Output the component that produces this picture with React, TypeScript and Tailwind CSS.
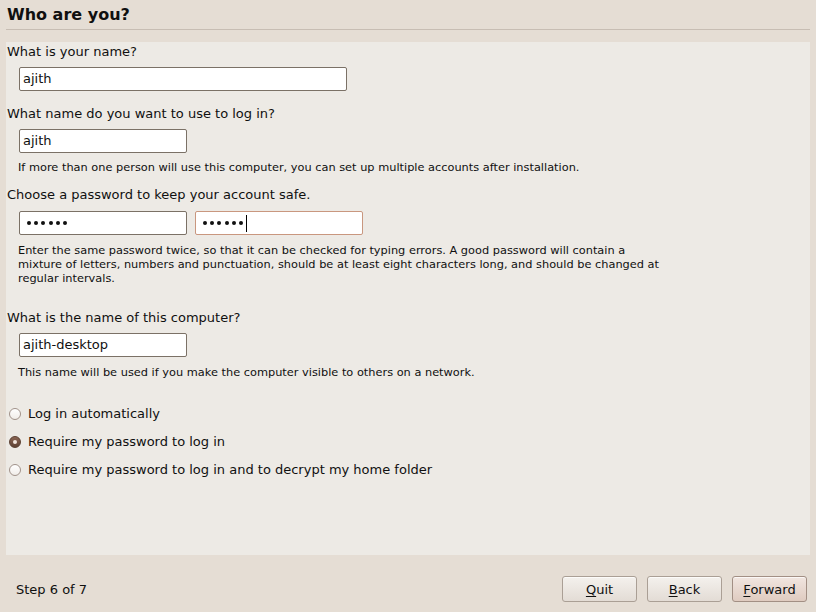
import React from "react";

const FONT = { fontFamily: '"DejaVu Sans", "Liberation Sans", sans-serif' };

function Field({ w, children, focused }: { w: string; children: React.ReactNode; focused?: boolean }) {
  return (
    <div
      className={`${w} h-[24px] bg-white rounded-[2px] border flex items-center pl-[3px] text-[13px] leading-[16px] text-[#101010] ${
        focused ? "border-[#c9977f]" : "border-[#7b7166]"
      }`}
    >
      {children}
    </div>
  );
}

function Dots({ caret }: { caret?: boolean }) {
  return (
    <div className="flex items-center pl-[2px]">
      {[0, 1, 2, 3, 4, 5].map((i) => (
        <span key={i} className="w-[7.3px] flex justify-center">
          <span className="w-[4px] h-[4px] rounded-full bg-[#101010]" />
        </span>
      ))}
      {caret && <span className="ml-[1px] w-[1px] h-[17px] bg-black" />}
    </div>
  );
}

function Radio({ checked, label }: { checked?: boolean; label: string }) {
  return (
    <div className="h-[28px] flex items-center">
      <div className="w-[28px] flex items-center pl-[9px]">
        {checked ? (
          <div className="w-[12px] h-[12px] rounded-full bg-gradient-to-b from-[#8a6553] to-[#5e4133] border border-[#5a3f31] flex items-center justify-center">
            <div className="w-[4px] h-[4px] rounded-full bg-[#f1e4dc]" />
          </div>
        ) : (
          <div className="w-[12px] h-[12px] rounded-full bg-gradient-to-b from-[#ffffff] to-[#f1ede9] border border-[#a1928a]" />
        )}
      </div>
      <span className="text-[13px] leading-[16px] text-[#101010]">{label}</span>
    </div>
  );
}

function Btn({ first, rest, def }: { first: string; rest: string; def?: boolean }) {
  return (
    <div
      className={`w-[75px] h-[26px] rounded-[3px] border flex items-center justify-center pt-[1px] text-[13px] leading-[16px] text-[#101010] shadow-[inset_0_1px_0_rgba(255,255,255,0.7)] ${
        def
          ? "border-[#a28f84] bg-gradient-to-b from-[#f1e6e0] to-[#dfcbc0]"
          : "border-[#aa9f95] bg-gradient-to-b from-[#f4f1ed] to-[#e3dcd5]"
      }`}
    >
      <span>
        <span className="underline underline-offset-[2px]">{first}</span>
        {rest}
      </span>
    </div>
  );
}

export default function App() {
  return (
    <div style={FONT} className="w-[816px] h-[612px] bg-[#e5ddd4] flex flex-col overflow-hidden">
      <div className="ml-[6px] mr-[6px] h-[30px] border-b border-[#c7bdb3] flex items-center pl-[1px] pb-[1px]">
        <span className="text-[16px] leading-[19px] font-bold text-[#101010]">Who are you?</span>
      </div>
      <div className="ml-[6px] mr-[6px] mt-[12px] h-[513px] bg-[#edeae5] flex flex-col pt-[2px]">
        <div className="pl-[1px] text-[13px] leading-[16px] text-[#101010]">What is your name?</div>
        <div className="mt-[7px] ml-[13px]">
          <Field w="w-[328px]">ajith</Field>
        </div>

        <div className="mt-[15px] pl-[1px] text-[13px] leading-[16px] text-[#101010]">What name do you want to use to log in?</div>
        <div className="mt-[7px] ml-[13px]">
          <Field w="w-[168px]">ajith</Field>
        </div>
        <div className="mt-[8px] ml-[12px] text-[11.35px] leading-[13px] text-[#101010]">
          If more than one person will use this computer, you can set up multiple accounts after installation.
        </div>

        <div className="mt-[13px] pl-[1px] text-[13px] leading-[16px] text-[#101010]">Choose a password to keep your account safe.</div>
        <div className="mt-[8px] ml-[13px] flex gap-[8px]">
          <Field w="w-[168px]">
            <Dots />
          </Field>
          <Field w="w-[168px]" focused>
            <Dots caret />
          </Field>
        </div>
        <div className="mt-[8px] ml-[12px] text-[11.35px] leading-[14px] text-[#101010]">
          Enter the same password twice, so that it can be checked for typing errors. A good password will contain a
          <br />
          mixture of letters, numbers and punctuation, should be at least eight characters long, and should be changed at
          <br />
          regular intervals.
        </div>

        <div className="mt-[25px] pl-[1px] text-[13px] leading-[16px] text-[#101010]">What is the name of this computer?</div>
        <div className="mt-[7px] ml-[13px]">
          <Field w="w-[168px]">ajith-desktop</Field>
        </div>
        <div className="mt-[9px] ml-[12px] text-[11.35px] leading-[13px] text-[#101010]">
          This name will be used if you make the computer visible to others on a network.
        </div>

        <div className="mt-[21px] flex flex-col -ml-[6px]">
          <Radio label="Log in automatically" />
          <Radio checked label="Require my password to log in" />
          <Radio label="Require my password to log in and to decrypt my home folder" />
        </div>
      </div>
      <div className="mt-[21px] h-[26px] flex items-center justify-between pl-[16px] pr-[9px]">
        <span className="pt-[2px] text-[13px] leading-[16px] text-[#101010]">Step 6 of 7</span>
        <div className="flex gap-[10px]">
          <Btn first="Q" rest="uit" />
          <Btn first="B" rest="ack" />
          <Btn first="F" rest="orward" def />
        </div>
      </div>
    </div>
  );
}
